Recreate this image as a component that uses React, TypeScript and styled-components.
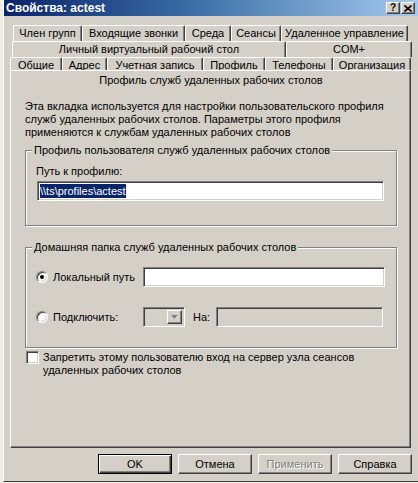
import styled, { createGlobalStyle, css } from 'styled-components'

const GlobalStyle = createGlobalStyle`
  * {
    box-sizing: border-box;
  }

  html,
  body {
    margin: 0;
    padding: 0;
    background: #eeece4;
  }

  body {
    font-family: 'Liberation Sans', Arial, sans-serif;
    font-size: 11px;
    color: #000;
  }
`

const raised = css`
  border: 1px solid;
  border-color: #fff #404040 #404040 #fff;
  box-shadow: inset -1px -1px #808080;
`

const sunken = css`
  border: 1px solid;
  border-color: #808080 #fff #fff #808080;
  box-shadow: inset 1px 1px #404040, inset -1px -1px #d4d0c8;
`

const Desktop = styled.div`
  display: flex;
  width: 418px;
  height: 483px;
  padding-left: 3px;
  overflow: hidden;
  background: #eeece4;
`

const Window = styled.div`
  flex: none;
  display: flex;
  flex-direction: column;
  width: 416px;
  height: 482px;
  background: #d4d0c8;
  border-left: 1px solid #fff;
  border-bottom: 1px solid #404040;
`

const TitleBar = styled.div`
  display: flex;
  align-items: center;
  height: 16px;
  padding: 0 4px 0 2px;
  background: linear-gradient(90deg, #0a246a 0%, #3a6ea5 45%, #a6caf0 100%);
`

const Title = styled.span`
  color: #fff;
  font-weight: bold;
  font-size: 12px;
  white-space: nowrap;
`

const TitleButtons = styled.div`
  display: flex;
  gap: 1px;
  margin-left: auto;
`

const TitleButton = styled.div`
  ${raised}
  display: flex;
  align-items: center;
  justify-content: center;
  width: 14px;
  height: 12px;
  background: #d4d0c8;
  font-weight: bold;
  font-size: 10px;
  line-height: 1;
`

const Body = styled.div`
  display: flex;
  flex-direction: column;
  padding: 9px 8px 0 6px;
`

const TabRow = styled.div<{ $offset: number; $height: number }>`
  display: flex;
  height: ${p => p.$height}px;
  padding-left: ${p => p.$offset}px;
`

const Tab = styled.div<{ $w: number }>`
  flex: none;
  display: flex;
  align-items: center;
  justify-content: center;
  width: ${p => p.$w}px;
  height: 16px;
  padding-bottom: 1px;
  background: #d4d0c8;
  border-top: 1px solid #fff;
  border-left: 1px solid #fff;
  border-right: 1px solid #404040;
  border-radius: 2px 2px 0 0;
  box-shadow: inset -1px 0 #808080;
  white-space: nowrap;
`

const Panel = styled.div`
  position: relative;
  display: flex;
  flex-direction: column;
  height: 378px;
  padding: 0 13px 0 14px;
  background: #d4d0c8;
  border-top: 1px solid #fff;
  border-left: 1px solid #fff;
  border-right: 1px solid #404040;
  border-bottom: 1px solid #404040;
  box-shadow: inset -1px -1px #808080;
`

const PanelHeader = styled.div`
  height: 19px;
  line-height: 19px;
  text-align: center;
  white-space: nowrap;
`

const Description = styled.p`
  margin: 10px 0 0;
  line-height: 13px;
  white-space: nowrap;
`

const Group = styled.fieldset<{ $top: number; $bottom: number }>`
  margin: ${p => p.$top}px 0 0;
  padding: 0 11px ${p => p.$bottom}px 10px;
  min-width: 0;
  border: 1px solid #808080;
  box-shadow: inset 1px 1px #fff, 1px 1px #fff;
`

const Legend = styled.legend`
  margin-left: -4px;
  padding: 0 2px;
  line-height: 13px;
  background: #d4d0c8;
  white-space: nowrap;
`

const FieldLabel = styled.div`
  margin-top: 8px;
  line-height: 13px;
`

const TextBox = styled.div<{ $w: number; $disabled?: boolean }>`
  ${sunken}
  display: flex;
  align-items: center;
  flex: none;
  width: ${p => p.$w}px;
  height: 20px;
  padding: 0 2px;
  background: ${p => (p.$disabled ? '#d4d0c8' : '#fff')};
  white-space: nowrap;
`

const Selected = styled.span`
  background: #0a246a;
  color: #fff;
  line-height: 14px;
`

const OptionRow = styled.div<{ $top: number }>`
  display: flex;
  align-items: center;
  margin-top: ${p => p.$top}px;
`

const RadioLabel = styled.label`
  display: flex;
  align-items: center;
  gap: 5px;
  width: 107px;
  flex: none;
  white-space: nowrap;
`

const Radio = styled.span<{ $checked?: boolean }>`
  position: relative;
  flex: none;
  width: 12px;
  height: 12px;
  border-radius: 50%;
  background: #fff;
  border: 1px solid;
  border-color: #808080 #fff #fff #808080;
  box-shadow: inset 1px 1px #404040, inset -1px -1px #d4d0c8;

  ${p =>
    p.$checked &&
    css`
      &::after {
        content: '';
        position: absolute;
        left: 3px;
        top: 3px;
        width: 4px;
        height: 4px;
        border-radius: 50%;
        background: #000;
      }
    `}
`

const Combo = styled.div`
  ${sunken}
  display: flex;
  justify-content: flex-end;
  flex: none;
  width: 42px;
  height: 20px;
  padding: 2px;
  background: #d4d0c8;
`

const ComboButton = styled.div`
  ${raised}
  display: flex;
  align-items: center;
  justify-content: center;
  width: 15px;
  height: 100%;
  background: #d4d0c8;
`

const OnLabel = styled.span`
  margin: 0 6px 0 8px;
`

const CheckRow = styled.label`
  display: flex;
  align-items: flex-start;
  gap: 4px;
  margin: 3px 0 0 1px;
  line-height: 13px;
  white-space: nowrap;
`

const CheckBox = styled.span`
  ${sunken}
  flex: none;
  width: 13px;
  height: 13px;
  background: #fff;
`

const ButtonRow = styled.div`
  display: flex;
  justify-content: flex-end;
  gap: 6px;
  margin: 6px -1px 0 0;
`

const Button = styled.button<{ $default?: boolean }>`
  width: 74px;
  height: 20px;
  padding: 0;
  background: #d4d0c8;
  font: 11px 'Liberation Sans', Arial, sans-serif;
  color: #000;
  ${raised}

  ${p =>
    p.$default &&
    css`
      border-color: #000;
      box-shadow: inset 1px 1px #fff, inset -1px -1px #404040, inset -2px -2px #808080;
    `}

  &:disabled {
    color: #808080;
    text-shadow: 1px 1px #fff;
  }
`

const tabRows: { offset: number; height: number; tabs: [string, number][] }[] = [
  {
    offset: 3,
    height: 16,
    tabs: [
      ['Член групп', 69],
      ['Входящие звонки', 103],
      ['Среда', 46],
      ['Сеансы', 50],
      ['Удаленное управление', 127],
    ],
  },
  {
    offset: 2,
    height: 16,
    tabs: [
      ['Личный виртуальный рабочий стол', 274],
      ['COM+', 126],
    ],
  },
  {
    offset: 0,
    height: 13,
    tabs: [
      ['Общие', 52],
      ['Адрес', 45],
      ['Учетная запись', 96],
      ['Профиль', 62],
      ['Телефоны', 68],
      ['Организация', 78],
    ],
  },
]

function App() {
  return (
    <>
      <GlobalStyle />
      <Desktop>
        <Window>
          <TitleBar>
            <Title>Свойства: actest</Title>
            <TitleButtons>
              <TitleButton>?</TitleButton>
              <TitleButton>
                <svg width="8" height="7" viewBox="0 0 8 7">
                  <path d="M0.5 0.5 L7.5 6.5 M7.5 0.5 L0.5 6.5" stroke="#000" strokeWidth="1.6" />
                </svg>
              </TitleButton>
            </TitleButtons>
          </TitleBar>

          <Body>
            {tabRows.map((row, i) => (
              <TabRow key={i} $offset={row.offset} $height={row.height}>
                {row.tabs.map(([label, w]) => (
                  <Tab key={label} $w={w}>
                    {label}
                  </Tab>
                ))}
              </TabRow>
            ))}

            <Panel>
              <PanelHeader>Профиль служб удаленных рабочих столов</PanelHeader>
              <Description>
                Эта вкладка используется для настройки пользовательского профиля
                <br />
                служб удаленных рабочих столов. Параметры этого профиля
                <br />
                применяются к службам удаленных рабочих столов
              </Description>

              <Group $top={5} $bottom={24}>
                <Legend>Профиль пользователя служб удаленных рабочих столов</Legend>
                <FieldLabel>Путь к профилю:</FieldLabel>
                <OptionRow $top={3} style={{ marginLeft: 1 }}>
                  <TextBox $w={347}>
                    <Selected>\\ts\profiles\actest</Selected>
                  </TextBox>
                </OptionRow>
              </Group>

              <Group $top={15} $bottom={20}>
                <Legend>Домашняя папка служб удаленных рабочих столов</Legend>
                <OptionRow $top={13}>
                  <RadioLabel>
                    <Radio $checked />
                    Локальный путь
                  </RadioLabel>
                  <TextBox $w={242} />
                </OptionRow>
                <OptionRow $top={20}>
                  <RadioLabel>
                    <Radio />
                    Подключить:
                  </RadioLabel>
                  <Combo>
                    <ComboButton>
                      <svg width="7" height="5" viewBox="0 0 7 5">
                        <path d="M1 1 H7 L4 4 Z" fill="#fff" />
                        <path d="M0 0 H7 L3.5 4 Z" fill="#808080" />
                      </svg>
                    </ComboButton>
                  </Combo>
                  <OnLabel>На:</OnLabel>
                  <TextBox $w={167} $disabled />
                </OptionRow>
              </Group>

              <CheckRow>
                <CheckBox />
                <span>
                  Запретить этому пользователю вход на сервер узла сеансов
                  <br />
                  удаленных рабочих столов
                </span>
              </CheckRow>
            </Panel>

            <ButtonRow>
              <Button $default>OK</Button>
              <Button>Отмена</Button>
              <Button disabled>Применить</Button>
              <Button>Справка</Button>
            </ButtonRow>
          </Body>
        </Window>
      </Desktop>
    </>
  )
}

export default App
